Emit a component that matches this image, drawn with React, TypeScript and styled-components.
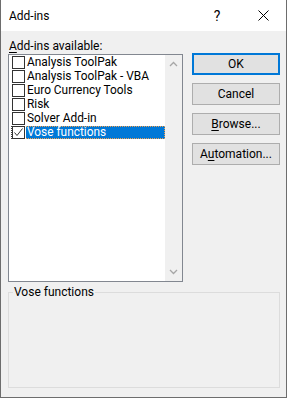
import styled, { createGlobalStyle } from "styled-components";

const GlobalStyle = createGlobalStyle`
  html, body {
    margin: 0;
    padding: 0;
    background: #f0f0f0;
  }
  body {
    font-family: Roboto, "Noto Sans", sans-serif;
    font-size: 12px;
    color: #000;
  }
`;

const Window = styled.div`
  width: 287px;
  height: 398px;
  box-sizing: border-box;
  border: 1px solid #6d6d6d;
  border-top: none;
  background: #f0f0f0;
  display: flex;
  flex-direction: column;
`;

const TitleBar = styled.div`
  height: 31px;
  background: #fff;
  display: flex;
  align-items: center;
`;

const TitleText = styled.div`
  flex: 1;
  padding-left: 8px;
  font-size: 12px;
  line-height: 16px;
  padding-top: 1px;
`;

const TitleButton = styled.div`
  width: 46px;
  height: 31px;
  display: flex;
  align-items: center;
  justify-content: center;
  font-size: 14px;
  color: #000;
`;

const Body = styled.div`
  flex: 1;
  padding: 7px 6px 0 7px;
  display: flex;
  flex-direction: column;
`;

const TopRow = styled.div`
  display: flex;
  gap: 9px;
`;

const LeftCol = styled.div`
  width: 176px;
  display: flex;
  flex-direction: column;
`;

const Caption = styled.div`
  height: 16px;
  line-height: 16px;
  padding-left: 1px;
`;

const Mn = styled.span`
  text-decoration: underline;
  text-underline-offset: 2px;
`;

const ListBox = styled.div`
  height: 228px;
  box-sizing: border-box;
  border: 1px solid #828790;
  background: #fff;
  display: flex;
`;

const Items = styled.div`
  flex: 1;
  padding-left: 2px;
`;

const Row = styled.div`
  height: 14px;
  display: flex;
  align-items: flex-start;
`;

const FocusBox = styled.div<{ $focus?: boolean }>`
  flex: 1;
  margin-top: 1px;
  height: 13px;
  display: flex;
  box-sizing: border-box;
  border-left: 1px dotted ${(p) => (p.$focus ? "#404040" : "transparent")};
`;

const Check = styled.div`
  width: 13px;
  height: 13px;
  box-sizing: border-box;
  border: 1px solid #333;
  background: #fff;
  margin-right: 1px;
  display: flex;
  align-items: center;
  justify-content: center;
`;

const ItemLabel = styled.div<{ $selected?: boolean }>`
  flex: 1;
  height: 13px;
  box-sizing: border-box;
  font-size: 11.9px;
  line-height: 11px;
  padding-left: 1px;
  white-space: nowrap;
  background: ${(p) => (p.$selected ? "#0078d7" : "transparent")};
  color: ${(p) => (p.$selected ? "#fff" : "#000")};
  border: 1px dotted ${(p) => (p.$selected ? "#f0a050" : "transparent")};
  border-left: none;
`;

const ScrollBar = styled.div`
  width: 17px;
  background: #f0f0f0;
  display: flex;
  flex-direction: column;
  justify-content: space-between;
  align-items: center;
  padding: 6px 0 6px;
  box-sizing: border-box;
`;

const ButtonCol = styled.div`
  display: flex;
  flex-direction: column;
  gap: 8px;
  padding-top: 15px;
`;

const Button = styled.div<{ $default?: boolean }>`
  width: 88px;
  height: 22px;
  box-sizing: border-box;
  background: #e1e1e1;
  border: ${(p) => (p.$default ? "2px solid #0078d7" : "1px solid #adadad")};
  display: flex;
  align-items: center;
  justify-content: center;
  line-height: 14px;
`;

const Group = styled.fieldset`
  margin: 2px 0 0 0;
  width: 272px;
  height: 104px;
  box-sizing: border-box;
  border: 1px solid #dcdcdc;
  padding: 0;
`;

const Legend = styled.legend`
  padding: 0 1px;
  margin-left: 4px;
  line-height: 16px;
  font-size: 12px;
`;

const Chevron = ({ up }: { up?: boolean }) => (
  <svg width="9" height="6" viewBox="0 0 9 6">
    <path
      d={up ? "M1 5 L4.5 1.5 L8 5" : "M1 1 L4.5 4.5 L8 1"}
      fill="none"
      stroke="#a6a6a6"
      strokeWidth="1.3"
    />
  </svg>
);

const CheckMark = () => (
  <svg width="11" height="11" viewBox="0 0 11 11">
    <path d="M1.5 5.5 L4 8.5 L9.5 1.5" fill="none" stroke="#333" strokeWidth="1" />
  </svg>
);

const items = [
  { name: "Analysis ToolPak", checked: false },
  { name: "Analysis ToolPak - VBA", checked: false },
  { name: "Euro Currency Tools", checked: false },
  { name: "Risk", checked: false },
  { name: "Solver Add-in", checked: false },
  { name: "Vose functions", checked: true },
];

export default function App() {
  const selected = 5;
  return (
    <>
      <GlobalStyle />
      <Window>
        <TitleBar>
          <TitleText>Add-ins</TitleText>
          <TitleButton>?</TitleButton>
          <TitleButton>
            <svg width="11" height="11" viewBox="0 0 11 11">
              <path d="M0.5 0.5 L10.5 10.5 M10.5 0.5 L0.5 10.5" stroke="#000" strokeWidth="1" />
            </svg>
          </TitleButton>
        </TitleBar>
        <Body>
          <TopRow>
            <LeftCol>
              <Caption>
                <Mn>A</Mn>dd-ins available:
              </Caption>
              <ListBox>
                <Items>
                  {items.map((it, i) => (
                    <Row key={it.name}>
                      <FocusBox $focus={i === selected}>
                        <Check>{it.checked && <CheckMark />}</Check>
                        <ItemLabel $selected={i === selected}>{it.name}</ItemLabel>
                      </FocusBox>
                    </Row>
                  ))}
                </Items>
                <ScrollBar>
                  <Chevron up />
                  <Chevron />
                </ScrollBar>
              </ListBox>
            </LeftCol>
            <ButtonCol>
              <Button $default>OK</Button>
              <Button>Cancel</Button>
              <Button>
                <span>
                  <Mn>B</Mn>rowse...
                </span>
              </Button>
              <Button>
                <span>
                  A<Mn>u</Mn>tomation...
                </span>
              </Button>
            </ButtonCol>
          </TopRow>
          <Group>
            <Legend>Vose functions</Legend>
          </Group>
        </Body>
      </Window>
    </>
  );
}
